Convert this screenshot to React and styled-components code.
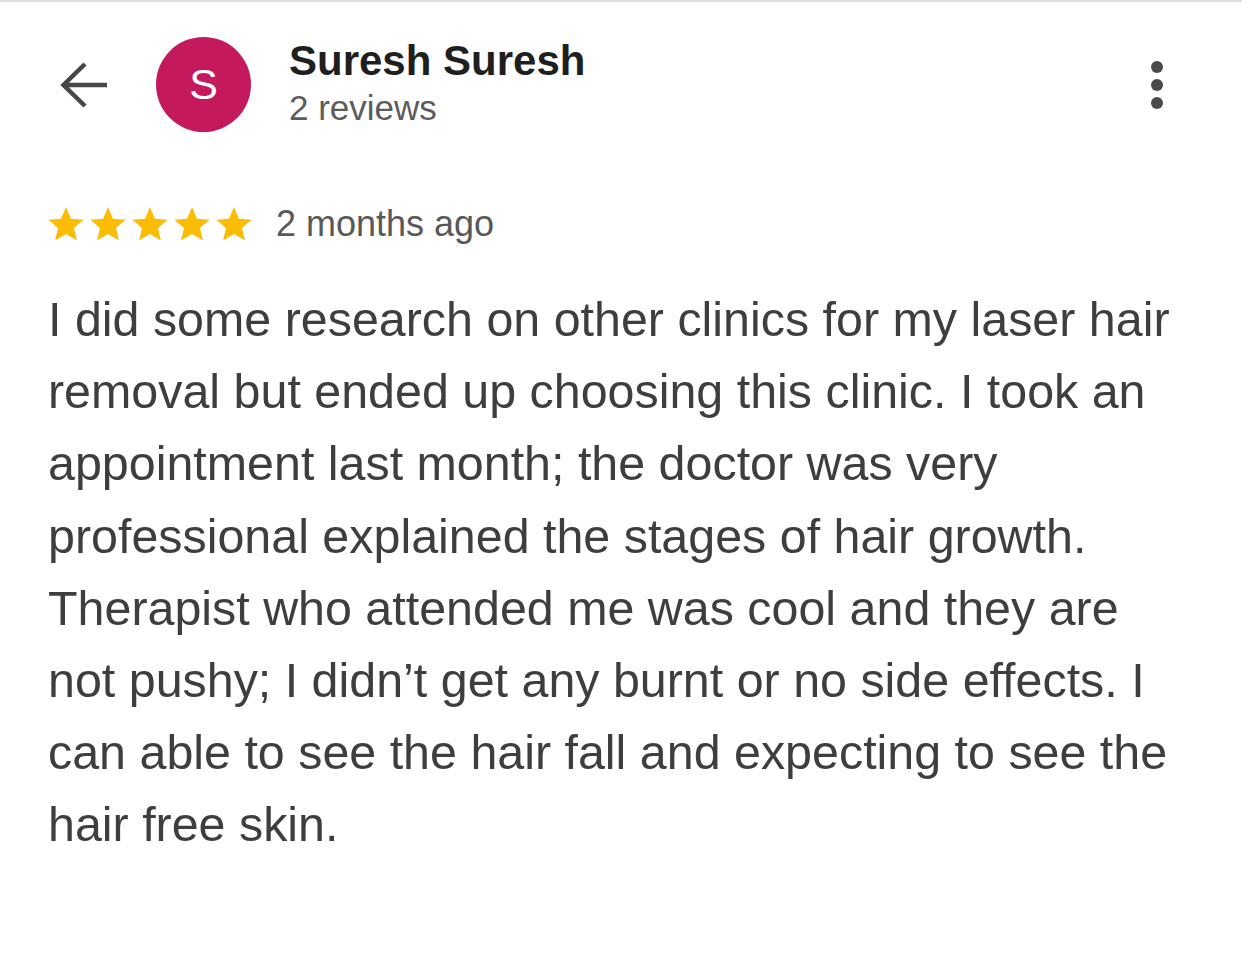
import React from "react";
import styled, { createGlobalStyle } from "styled-components";

const Global = createGlobalStyle`
  html, body { margin: 0; padding: 0; background: #ffffff; }
  body { font-family: "Liberation Sans", Arial, Helvetica, sans-serif; }
`;

const Page = styled.div`
  width: 1242px;
  min-height: 980px;
  box-sizing: border-box;
  border-top: 2px solid #dedede;
  padding: 35px 40px 0 48px;
  background: #fff;
`;

const Header = styled.header`
  display: flex;
  align-items: center;
  height: 95px;
`;

const BackButton = styled.button`
  display: flex;
  align-items: center;
  justify-content: center;
  width: 48px;
  height: 48px;
  margin-left: 12px;
  padding: 0;
  border: none;
  background: none;
  color: #474747;
`;

const Avatar = styled.div`
  width: 95px;
  height: 95px;
  margin-left: 48px;
  border-radius: 50%;
  background: #c5195d;
  color: #fff;
  display: flex;
  align-items: center;
  justify-content: center;
  font-size: 43px;
  line-height: 1;
  flex-shrink: 0;
`;

const Author = styled.div`
  display: flex;
  flex-direction: column;
  align-self: flex-start;
  padding-top: 1px;
  margin-left: 38px;
  flex: 1;
`;

const Name = styled.div`
  font-size: 42px;
  font-weight: 700;
  line-height: 46px;
  color: #1f1f1f;
`;

const Sub = styled.div`
  font-size: 35px;
  line-height: 40px;
  margin-top: 4px;
  color: #5c5c5c;
`;

const Kebab = styled.div`
  display: flex;
  flex-direction: column;
  align-items: center;
  gap: 6px;
  margin-right: 39px;
`;

const Dot = styled.span`
  width: 12px;
  height: 12px;
  border-radius: 50%;
  background: #4a4a4a;
`;

const Meta = styled.div`
  display: flex;
  align-items: center;
  height: 44px;
  margin-top: 70px;
`;

const Stars = styled.div`
  display: flex;
  align-items: center;
  gap: 6px;
`;

const Time = styled.span`
  margin-left: 24px;
  font-size: 36px;
  line-height: 44px;
  color: #585858;
`;

const Body = styled.p`
  max-width: 1135px;
  margin: 37px 0 0 0;
  font-size: 48.4px;
  line-height: 72.2px;
  color: #3e3e3e;
`;

const Star = () => (
  <svg width="36" height="34" viewBox="2 2 20 19.27" aria-hidden="true">
    <path
      fill="#fbbc04"
      d="M12 17.27L18.18 21l-1.64-7.03L22 9.24l-7.19-.61L12 2 9.19 8.63 2 9.24l5.46 4.73L5.82 21z"
    />
  </svg>
);

const text =
  "I did some research on other clinics for my laser hair removal but ended up choosing this clinic. I took an appointment last month; the doctor was very professional explained the stages of hair growth. Therapist who attended me was cool and they are not pushy; I didn\u2019t get any burnt or no side effects. I can able to see the hair fall and expecting to see the hair free skin.";

export default function App() {
  return (
    <>
      <Global />
      <Page>
        <Header>
          <BackButton aria-label="Back">
            <svg width="48" height="48" viewBox="0 0 48 48" fill="none">
              <path
                d="M47 24H4M25 3L3.5 24 25 45"
                stroke="currentColor"
                strokeWidth="4.5"
                strokeLinecap="butt"
                strokeLinejoin="miter"
              />
            </svg>
          </BackButton>
          <Avatar>S</Avatar>
          <Author>
            <Name>Suresh Suresh</Name>
            <Sub>2 reviews</Sub>
          </Author>
          <Kebab aria-label="More options">
            <Dot />
            <Dot />
            <Dot />
          </Kebab>
        </Header>
        <Meta>
          <Stars>
            <Star />
            <Star />
            <Star />
            <Star />
            <Star />
          </Stars>
          <Time>2 months ago</Time>
        </Meta>
        <Body>{text}</Body>
      </Page>
    </>
  );
}
